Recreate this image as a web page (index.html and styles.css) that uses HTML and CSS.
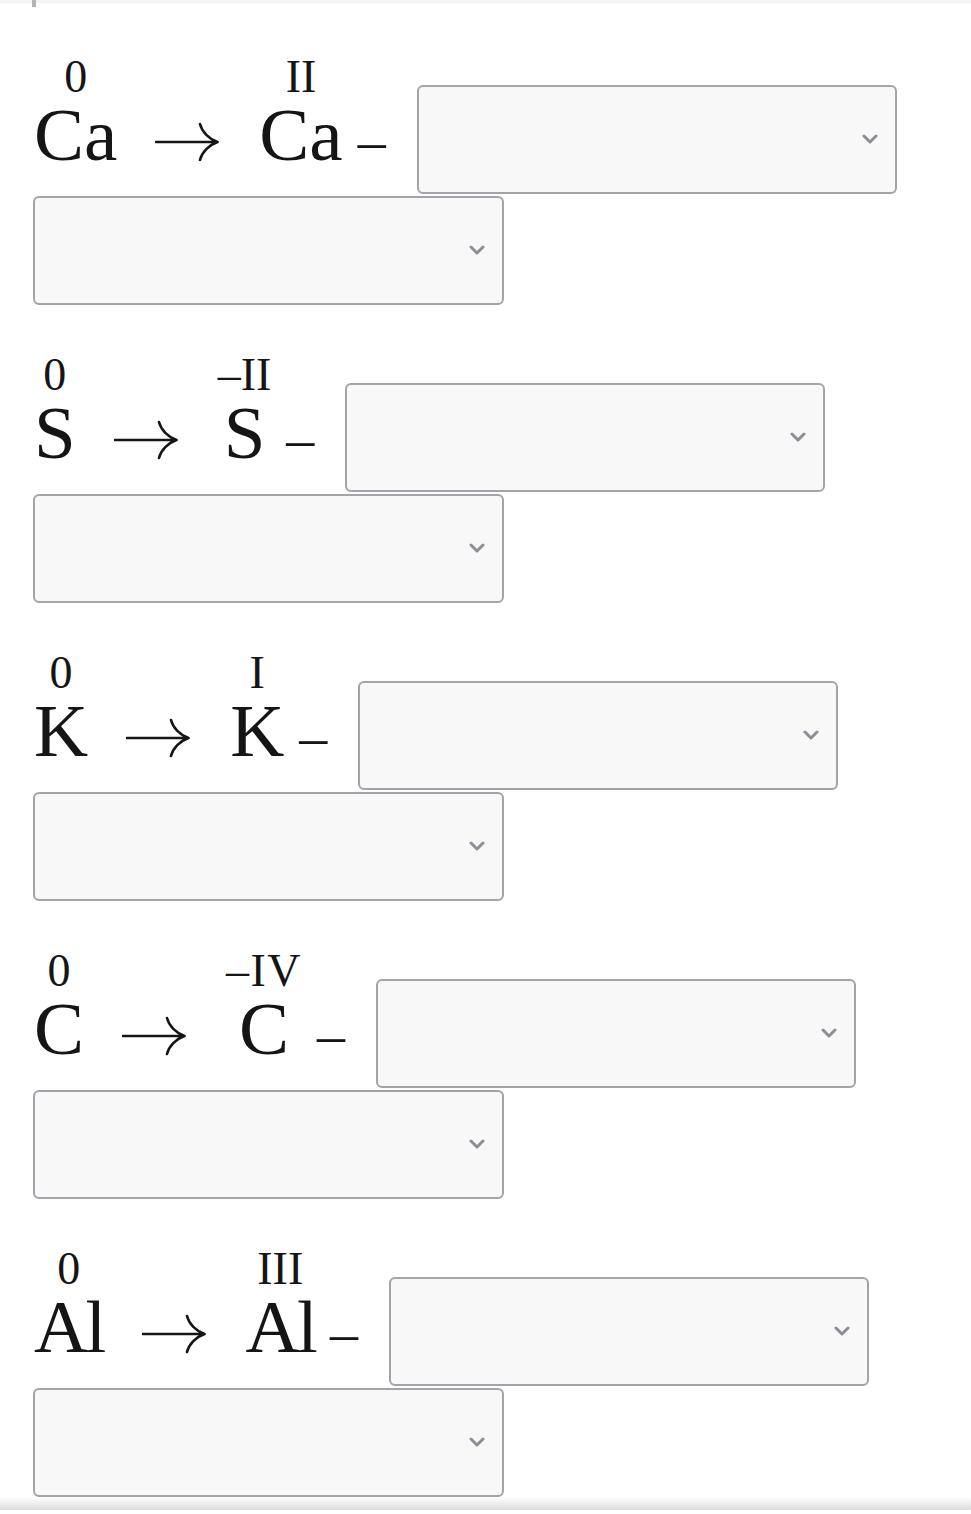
FILE: index.html
```html
<!DOCTYPE html>
<html lang="en">
<head>
<meta charset="utf-8">
<title>Oxidation states</title>
<link rel="stylesheet" href="styles.css">
</head>
<body>
<div class="topbar"><span class="tick"></span></div>
<main class="sheet">

  <section class="item">
    <div class="line">
      <div class="eq">
        <span class="atom"><span class="ox">0</span><span class="el">Ca</span></span>
        <svg class="arrow" viewBox="0 0 64 40" role="img" aria-label="→"><path d="M1 20 H62.5 M45 2 C47 10 54 17 62.5 20 M45 38 C47 30 54 23 62.5 20"/></svg>
        <span class="atom"><span class="ox">II</span><span class="el">Ca</span></span>
        <span class="dash">–</span>
      </div>
      <div class="pick wide"><select aria-label="electrons"><option></option></select><svg class="chev" viewBox="0 0 16 10"><path d="M2 2 L8 8 L14 2"/></svg></div>
    </div>
    <div class="pick narrow"><select aria-label="process"><option></option></select><svg class="chev" viewBox="0 0 16 10"><path d="M2 2 L8 8 L14 2"/></svg></div>
  </section>

  <section class="item">
    <div class="line">
      <div class="eq">
        <span class="atom"><span class="ox">0</span><span class="el">S</span></span>
        <svg class="arrow" viewBox="0 0 64 40" role="img" aria-label="→"><path d="M1 20 H62.5 M45 2 C47 10 54 17 62.5 20 M45 38 C47 30 54 23 62.5 20"/></svg>
        <span class="atom"><span class="ox">–II</span><span class="el">S</span></span>
        <span class="dash">–</span>
      </div>
      <div class="pick wide"><select aria-label="electrons"><option></option></select><svg class="chev" viewBox="0 0 16 10"><path d="M2 2 L8 8 L14 2"/></svg></div>
    </div>
    <div class="pick narrow"><select aria-label="process"><option></option></select><svg class="chev" viewBox="0 0 16 10"><path d="M2 2 L8 8 L14 2"/></svg></div>
  </section>

  <section class="item">
    <div class="line">
      <div class="eq">
        <span class="atom"><span class="ox">0</span><span class="el">K</span></span>
        <svg class="arrow" viewBox="0 0 64 40" role="img" aria-label="→"><path d="M1 20 H62.5 M45 2 C47 10 54 17 62.5 20 M45 38 C47 30 54 23 62.5 20"/></svg>
        <span class="atom"><span class="ox">I</span><span class="el">K</span></span>
        <span class="dash">–</span>
      </div>
      <div class="pick wide"><select aria-label="electrons"><option></option></select><svg class="chev" viewBox="0 0 16 10"><path d="M2 2 L8 8 L14 2"/></svg></div>
    </div>
    <div class="pick narrow"><select aria-label="process"><option></option></select><svg class="chev" viewBox="0 0 16 10"><path d="M2 2 L8 8 L14 2"/></svg></div>
  </section>

  <section class="item">
    <div class="line">
      <div class="eq">
        <span class="atom"><span class="ox">0</span><span class="el">C</span></span>
        <svg class="arrow" viewBox="0 0 64 40" role="img" aria-label="→"><path d="M1 20 H62.5 M45 2 C47 10 54 17 62.5 20 M45 38 C47 30 54 23 62.5 20"/></svg>
        <span class="atom"><span class="ox wide-ox">–IV</span><span class="el">C</span></span>
        <span class="dash">–</span>
      </div>
      <div class="pick wide"><select aria-label="electrons"><option></option></select><svg class="chev" viewBox="0 0 16 10"><path d="M2 2 L8 8 L14 2"/></svg></div>
    </div>
    <div class="pick narrow"><select aria-label="process"><option></option></select><svg class="chev" viewBox="0 0 16 10"><path d="M2 2 L8 8 L14 2"/></svg></div>
  </section>

  <section class="item">
    <div class="line">
      <div class="eq">
        <span class="atom"><span class="ox">0</span><span class="el tight">Al</span></span>
        <svg class="arrow" viewBox="0 0 64 40" role="img" aria-label="→"><path d="M1 20 H62.5 M45 2 C47 10 54 17 62.5 20 M45 38 C47 30 54 23 62.5 20"/></svg>
        <span class="atom"><span class="ox">III</span><span class="el tight">Al</span></span>
        <span class="dash">–</span>
      </div>
      <div class="pick wide"><select aria-label="electrons"><option></option></select><svg class="chev" viewBox="0 0 16 10"><path d="M2 2 L8 8 L14 2"/></svg></div>
    </div>
    <div class="pick narrow"><select aria-label="process"><option></option></select><svg class="chev" viewBox="0 0 16 10"><path d="M2 2 L8 8 L14 2"/></svg></div>
  </section>

</main>
<div class="bottomshade"></div>
</body>
</html>
```

FILE: styles.css
```css
html, body {
  margin: 0;
  padding: 0;
  background: #ffffff;
}

body {
  font-family: "Liberation Serif", "Times New Roman", serif;
  color: #151515;
}

.topbar {
  height: 7px;
  background: linear-gradient(to bottom, #f3f3f3 0, #f3f3f3 3px, #ffffff 3px);
  display: flex;
}

.tick {
  width: 4px;
  height: 7px;
  margin-left: 32px;
  background: #b4b4b4;
}

.sheet {
  padding: 51.1px 0 0 33px;
  display: flex;
  flex-direction: column;
  gap: 51.1px;
}

.item {
  display: flex;
  flex-direction: column;
  align-items: flex-start;
}

.line {
  display: flex;
  align-items: flex-start;
}

.eq {
  display: flex;
  align-items: flex-end;
  padding-left: 1px;
}

.atom {
  display: flex;
  flex-direction: column;
  align-items: center;
}

.ox {
  font-size: 46px;
  line-height: 38.7px;
  white-space: nowrap;
}

.ox.wide-ox {
  letter-spacing: 1.5px;
}

.el {
  font-size: 75px;
  line-height: 75px;
  white-space: nowrap;
}

.el.tight {
  letter-spacing: -2.75px;
}

.arrow {
  width: 64px;
  height: 40px;
  margin: 0 40px 9.8px 38px;
  fill: none;
  stroke: #151515;
  stroke-width: 2.6;
  stroke-linecap: round;
}

.dash {
  font-size: 56px;
  line-height: 62.2px;
  margin-left: 15px;
}

.pick {
  position: relative;
}

.pick.wide {
  width: 480px;
  margin-top: 26.9px;
  margin-left: 31px;
}

.pick.narrow {
  width: 471px;
  margin-top: 2px;
}

.pick select {
  display: block;
  width: 100%;
  height: 109px;
  margin: 0;
  -webkit-appearance: none;
  appearance: none;
  border: 2px solid #a3a3aa;
  border-radius: 6px;
  background: #f8f8f9;
  font-family: "Inter", sans-serif;
  font-size: 20px;
}

.chev {
  position: absolute;
  right: 19px;
  top: 50%;
  width: 16px;
  height: 10px;
  margin-top: -5px;
  fill: none;
  stroke: #8d8d96;
  stroke-width: 3;
  stroke-linecap: round;
  stroke-linejoin: round;
  pointer-events: none;
}

.bottomshade {
  height: 13px;
  background: linear-gradient(to bottom, rgba(255,255,255,0) 0, #dcdcdc 100%);
  border-bottom: 6px solid #ffffff;
}
```
